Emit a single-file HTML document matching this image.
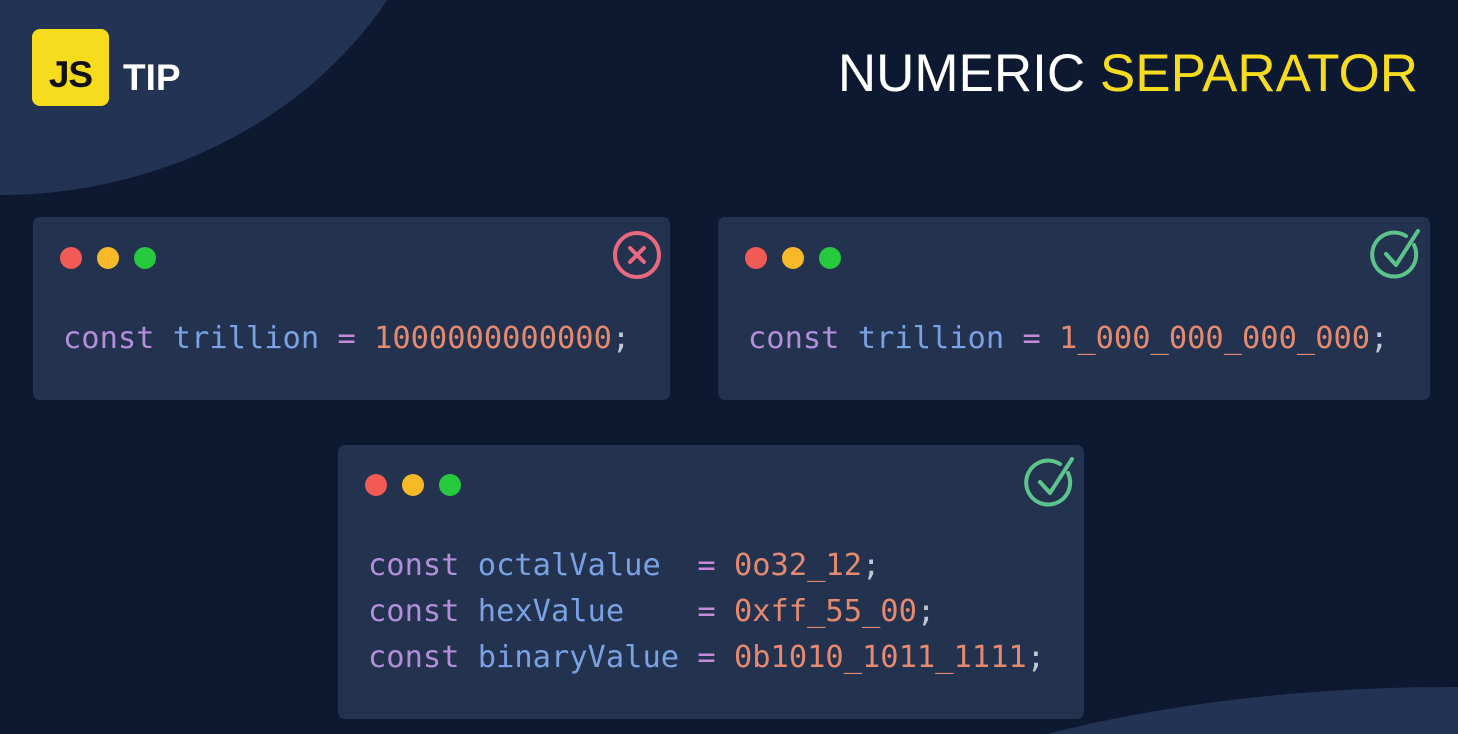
<!DOCTYPE html>
<html><head><style>
*{margin:0;padding:0;box-sizing:border-box}
html,body{width:1458px;height:734px;overflow:hidden}
body{background:#0c1930;position:relative;font-family:"Liberation Sans",sans-serif}
.wrap{position:absolute;left:0;top:0;width:1458px;height:734px;overflow:hidden}
.blob1{position:absolute;left:-450px;top:-600px;width:900px;height:795px;border-radius:50%;background:#223353}
.blob2{position:absolute;left:700px;top:687px;width:1500px;height:600px;border-radius:50%;background:#223353}
.logo{position:absolute;left:32px;top:29px;width:77px;height:77px;background:#f7dc1e;border-radius:8px;font-weight:bold;font-size:37px;color:#111;text-align:center;line-height:92px;letter-spacing:-1px}
.tip{position:absolute;left:123px;top:57px;font-size:37px;font-weight:bold;color:#fff}
.title{position:absolute;right:40px;top:43px;font-size:53px;color:#fff;letter-spacing:0px}
.title span{color:#f7dc1e}
.card{position:absolute;background:#22324f;border-radius:7px}
.dot{position:absolute;width:22px;height:22px;border-radius:50%}
.r{background:#f25a55}.y{background:#f7b928}.g{background:#27c93f}
.code{position:absolute;font-family:"DejaVu Sans Mono","Liberation Mono",monospace;font-size:30.4px;color:#c0c8d8;white-space:pre;line-height:46px}
.k{color:#b48ed8}.i{color:#7aa2e3}.e{color:#c58ad8}.n{color:#e58a6e}
svg{position:absolute}
</style></head><body><div class="wrap">
<div class="blob1"></div>
<div class="blob2"></div>
<div class="logo">JS</div>
<div class="tip">TIP</div>
<div class="title">NUMERIC <span>SEPARATOR</span></div>

<div class="card" style="left:33px;top:217px;width:637px;height:183px">
<div class="dot r" style="left:27px;top:30px"></div><div class="dot y" style="left:64px;top:30px"></div><div class="dot g" style="left:101px;top:30px"></div>
<svg style="left:579px;top:13px" width="50" height="50" viewBox="0 0 50 50"><circle cx="25" cy="25" r="22" fill="none" stroke="#e8687f" stroke-width="4"/><path d="M18 18L32 32M32 18L18 32" stroke="#e8687f" stroke-width="4" stroke-linecap="round"/></svg>
<div class="code" style="left:30px;top:99px"><span class="k">const</span> <span class="i">trillion</span> <span class="e">=</span> <span class="n">1000000000000</span>;</div>
</div>

<div class="card" style="left:718px;top:217px;width:712px;height:183px">
<div class="dot r" style="left:27px;top:30px"></div><div class="dot y" style="left:64px;top:30px"></div><div class="dot g" style="left:101px;top:30px"></div>
<svg style="left:652px;top:8px" width="56" height="56" viewBox="0 0 56 56"><path d="M44 20A22 22 0 1 1 36 11" fill="none" stroke="#5cc48a" stroke-width="4" stroke-linecap="round"/><path d="M16 29L26 40L48 6" fill="none" stroke="#5cc48a" stroke-width="4" stroke-linecap="round" stroke-linejoin="round"/></svg>
<div class="code" style="left:30px;top:99px"><span class="k">const</span> <span class="i">trillion</span> <span class="e">=</span> <span class="n">1_000_000_000_000</span>;</div>
</div>

<div class="card" style="left:338px;top:445px;width:746px;height:274px">
<div class="dot r" style="left:27px;top:29px"></div><div class="dot y" style="left:64px;top:29px"></div><div class="dot g" style="left:101px;top:29px"></div>
<svg style="left:686px;top:8px" width="56" height="56" viewBox="0 0 56 56"><path d="M44 20A22 22 0 1 1 36 11" fill="none" stroke="#5cc48a" stroke-width="4" stroke-linecap="round"/><path d="M16 29L26 40L48 6" fill="none" stroke="#5cc48a" stroke-width="4" stroke-linecap="round" stroke-linejoin="round"/></svg>
<div class="code" style="left:30px;top:98px"><span class="k">const</span> <span class="i">octalValue</span>  <span class="e">=</span> <span class="n">0o32_12</span>;
<span class="k">const</span> <span class="i">hexValue</span>    <span class="e">=</span> <span class="n">0xff_55_00</span>;
<span class="k">const</span> <span class="i">binaryValue</span> <span class="e">=</span> <span class="n">0b1010_1011_1111</span>;</div>
</div>
</div></body></html>
